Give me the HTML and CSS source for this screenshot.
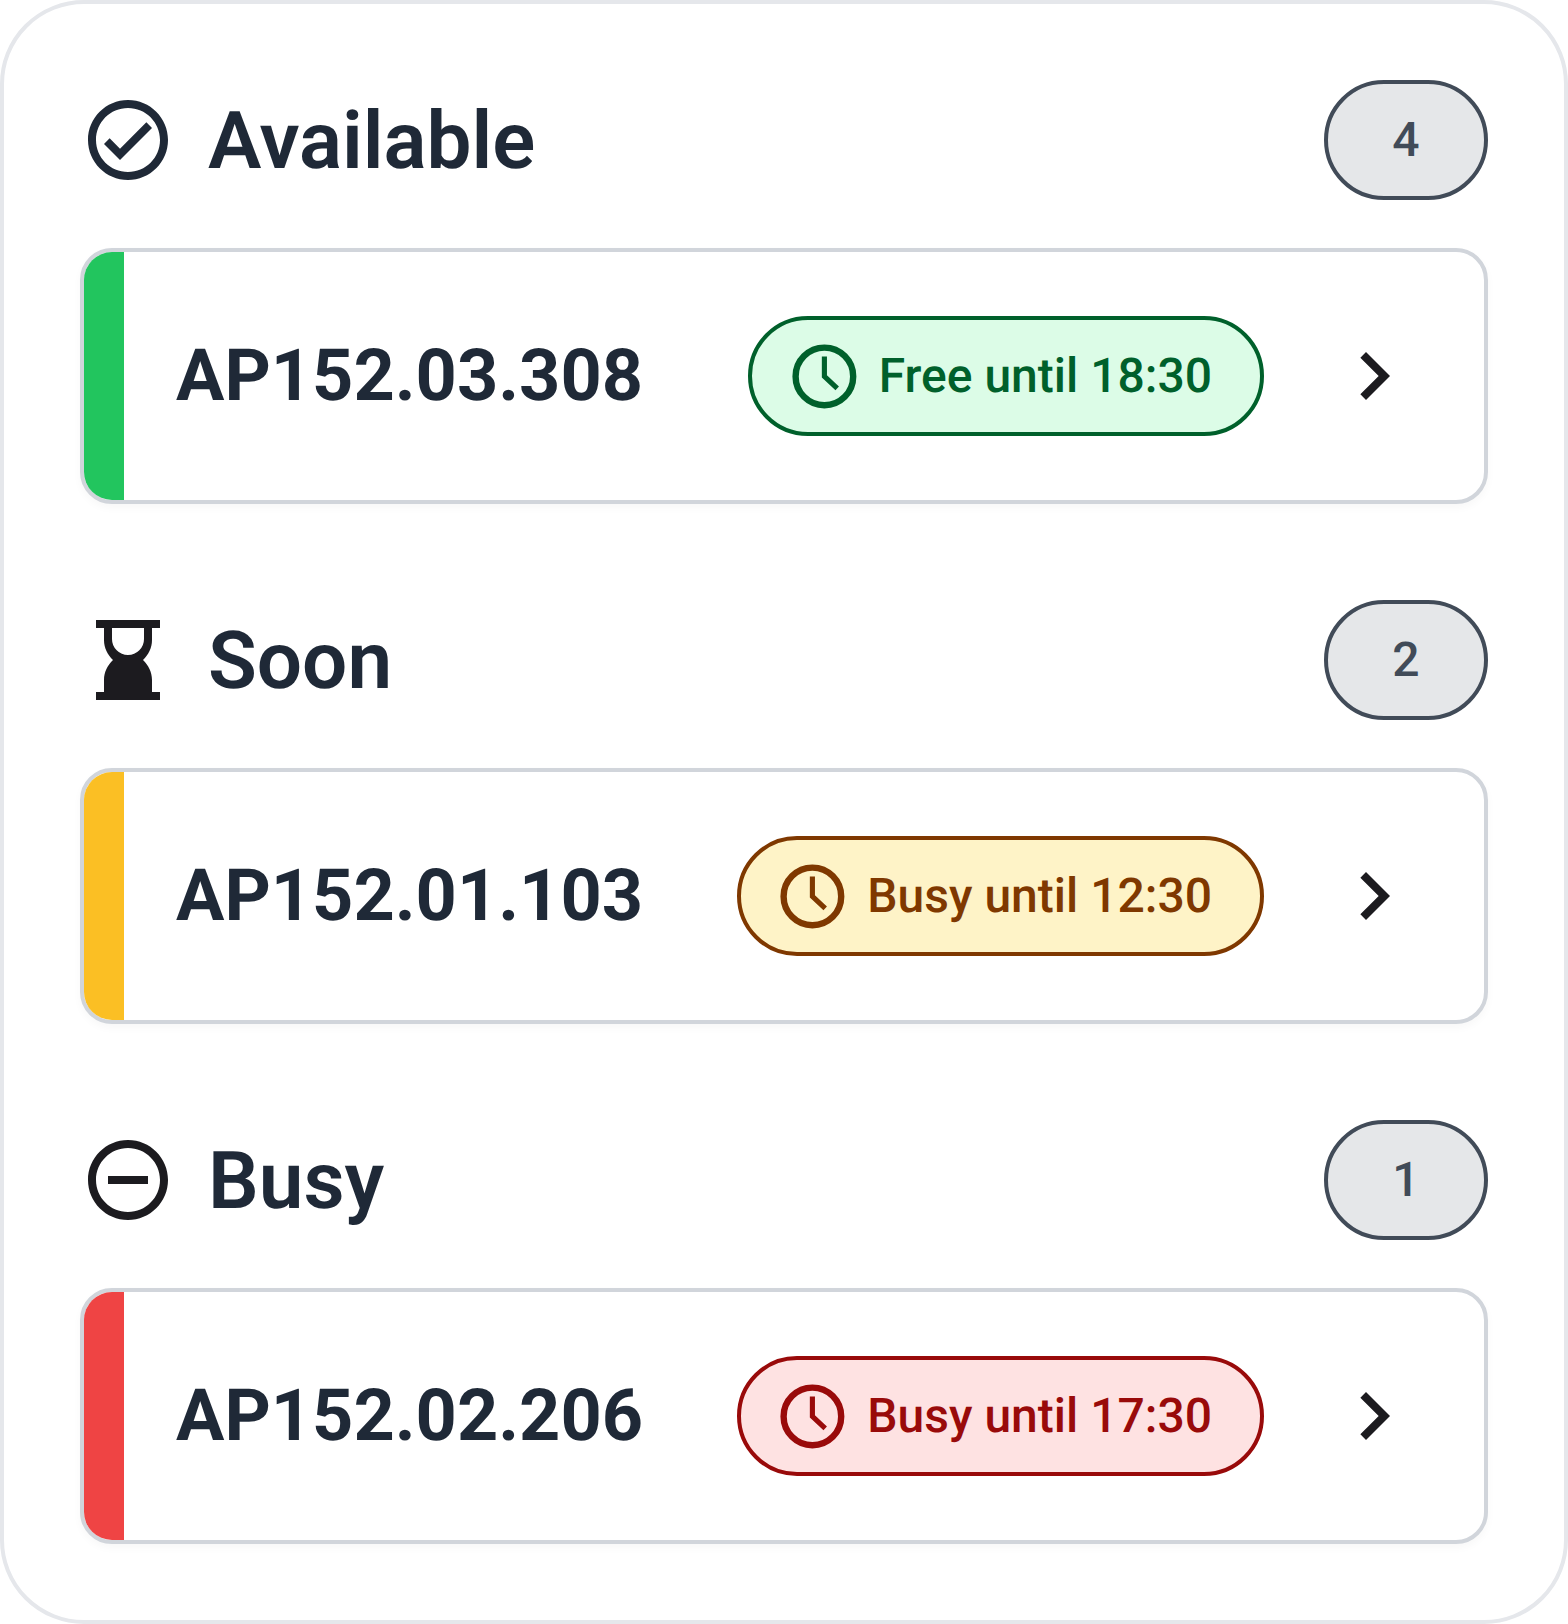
FILE: index.html
```html
<!DOCTYPE html>
<html lang="en">
<head>
<meta charset="utf-8">
<title>Rooms</title>
<link rel="stylesheet" href="styles.css">
</head>
<body>
<main class="panel">
  <section class="group">
    <header class="group-head">
      <svg class="head-icon icon-slate" viewBox="0 0 24 24"><path d="M12 2C6.48 2 2 6.48 2 12s4.48 10 10 10 10-4.48 10-10S17.52 2 12 2zm0 18c-4.42 0-8-3.58-8-8s3.58-8 8-8 8 3.58 8 8-3.58 8-8 8zm4.59-12.42L10 14.17l-2.59-2.58L6 13l4 4 8-8z"/></svg>
      <h2 class="group-title">Available</h2>
      <span class="count"><span class="count-text">4</span></span>
    </header>
    <article class="room">
      <span class="stripe stripe-green"></span>
      <h3 class="room-name">AP152.03.308</h3>
      <span class="status status-green">
        <svg class="clock" viewBox="0 0 24 24"><circle cx="12" cy="12" r="9" fill="none" stroke="currentColor" stroke-width="2"/><path d="M12 5.750V12l4 3.750" fill="none" stroke="currentColor" stroke-width="1.6"/></svg>
        <span class="status-text">Free until 18:30</span>
      </span>
      <svg class="chevron" viewBox="0 0 24 24"><path d="M10 6L8.59 7.41 13.170 12l-4.580 4.590L10 18l6-6z"/></svg>
    </article>
  </section>
  <section class="group">
    <header class="group-head">
      <svg class="head-icon" viewBox="0 0 24 24"><path fill-rule="evenodd" d="M4 2h16v2h-2v3c0 2-.9 3.700-2.250 5C17.100 13.300 18 15 18 17v3h2v2H4v-2h2v-3c0-2 .9-3.700 2.250-5C6.900 10.700 6 9 6 7V4H4zM8 4v2.750a4 4 0 0 0 8 0V4z"/></svg>
      <h2 class="group-title">Soon</h2>
      <span class="count"><span class="count-text">2</span></span>
    </header>
    <article class="room">
      <span class="stripe stripe-amber"></span>
      <h3 class="room-name">AP152.01.103</h3>
      <span class="status status-amber">
        <svg class="clock" viewBox="0 0 24 24"><circle cx="12" cy="12" r="9" fill="none" stroke="currentColor" stroke-width="2"/><path d="M12 5.750V12l4 3.750" fill="none" stroke="currentColor" stroke-width="1.6"/></svg>
        <span class="status-text">Busy until 12:30</span>
      </span>
      <svg class="chevron" viewBox="0 0 24 24"><path d="M10 6L8.59 7.41 13.170 12l-4.580 4.590L10 18l6-6z"/></svg>
    </article>
  </section>
  <section class="group">
    <header class="group-head">
      <svg class="head-icon" viewBox="0 0 24 24"><path d="M7 11h10v2H7zm5-9C6.48 2 2 6.48 2 12s4.48 10 10 10 10-4.48 10-10S17.52 2 12 2zm0 18c-4.41 0-8-3.59-8-8s3.59-8 8-8 8 3.59 8 8-3.59 8-8 8z"/></svg>
      <h2 class="group-title">Busy</h2>
      <span class="count"><span class="count-text">1</span></span>
    </header>
    <article class="room">
      <span class="stripe stripe-red"></span>
      <h3 class="room-name">AP152.02.206</h3>
      <span class="status status-red">
        <svg class="clock" viewBox="0 0 24 24"><circle cx="12" cy="12" r="9" fill="none" stroke="currentColor" stroke-width="2"/><path d="M12 5.750V12l4 3.750" fill="none" stroke="currentColor" stroke-width="1.6"/></svg>
        <span class="status-text">Busy until 17:30</span>
      </span>
      <svg class="chevron" viewBox="0 0 24 24"><path d="M10 6L8.59 7.41 13.170 12l-4.580 4.590L10 18l6-6z"/></svg>
    </article>
  </section>
</main>
</body>
</html>
```
FILE: styles.css
```css
* { box-sizing: border-box; }
html, body { margin: 0; background: #ffffff; }
body {
  font-family: Roboto, "Liberation Sans", sans-serif;
  text-rendering: geometricPrecision;
}
.panel {
  width: 1568px;
  height: 1624px;
  padding: 76px;
  border: 4px solid #e5e7eb;
  border-radius: 84px;
  background: #ffffff;
  display: flex;
  flex-direction: column;
  gap: 96px;
}
.group { display: flex; flex-direction: column; gap: 48px; }
.group-head { display: flex; align-items: center; height: 120px; }
.head-icon { width: 96px; height: 96px; fill: #1c1b1f; flex: none; }
.icon-slate { fill: #1f2937; }
.group-title {
  margin: 2px 0 0 32px;
  font-size: 80px;
  line-height: 1;
  font-weight: 600;
  color: #1f2937;
}
.count {
  margin-left: auto;
  width: 164px;
  height: 120px;
  display: flex;
  align-items: center;
  justify-content: center;
  border: 4px solid #414b58;
  border-radius: 60px;
  background: #e5e7e9;
  color: #414b58;
  font-size: 48px;
  font-weight: 500;
}
.count-text { margin-bottom: 2px; }
.room {
  position: relative;
  height: 256px;
  display: flex;
  align-items: center;
  padding-left: 92px;
  padding-right: 62px;
  border: 4px solid #d1d5db;
  border-radius: 32px;
  background: #ffffff;
  overflow: hidden;
  box-shadow: 0 4px 8px rgba(0, 0, 0, 0.03);
}
.stripe { position: absolute; left: 0; top: 0; bottom: 0; width: 40px; }
.stripe-green { background: #22c55e; }
.stripe-amber { background: #fbbf24; }
.stripe-red { background: #ef4444; }
.room-name {
  margin: 0;
  font-size: 72px;
  line-height: 1;
  font-weight: 700;
  color: #1f2937;
}
.status {
  margin-left: auto;
  height: 120px;
  display: flex;
  align-items: center;
  gap: 16px;
  padding: 0 48px 0 33.6px;
  border: 4px solid currentColor;
  border-radius: 60px;
  font-size: 48px;
  font-weight: 500;
}
.status-text { margin-bottom: 2px; }
.status-green { background: #dcfce7; color: #00602b; }
.status-amber { background: #fef3c7; color: #7f3800; }
.status-red { background: #fee2e2; color: #990a0a; }
.clock { width: 76.8px; height: 76.8px; flex: none; }
.chevron { width: 96px; height: 96px; margin-left: 62px; fill: #1c1b1f; flex: none; }
```
